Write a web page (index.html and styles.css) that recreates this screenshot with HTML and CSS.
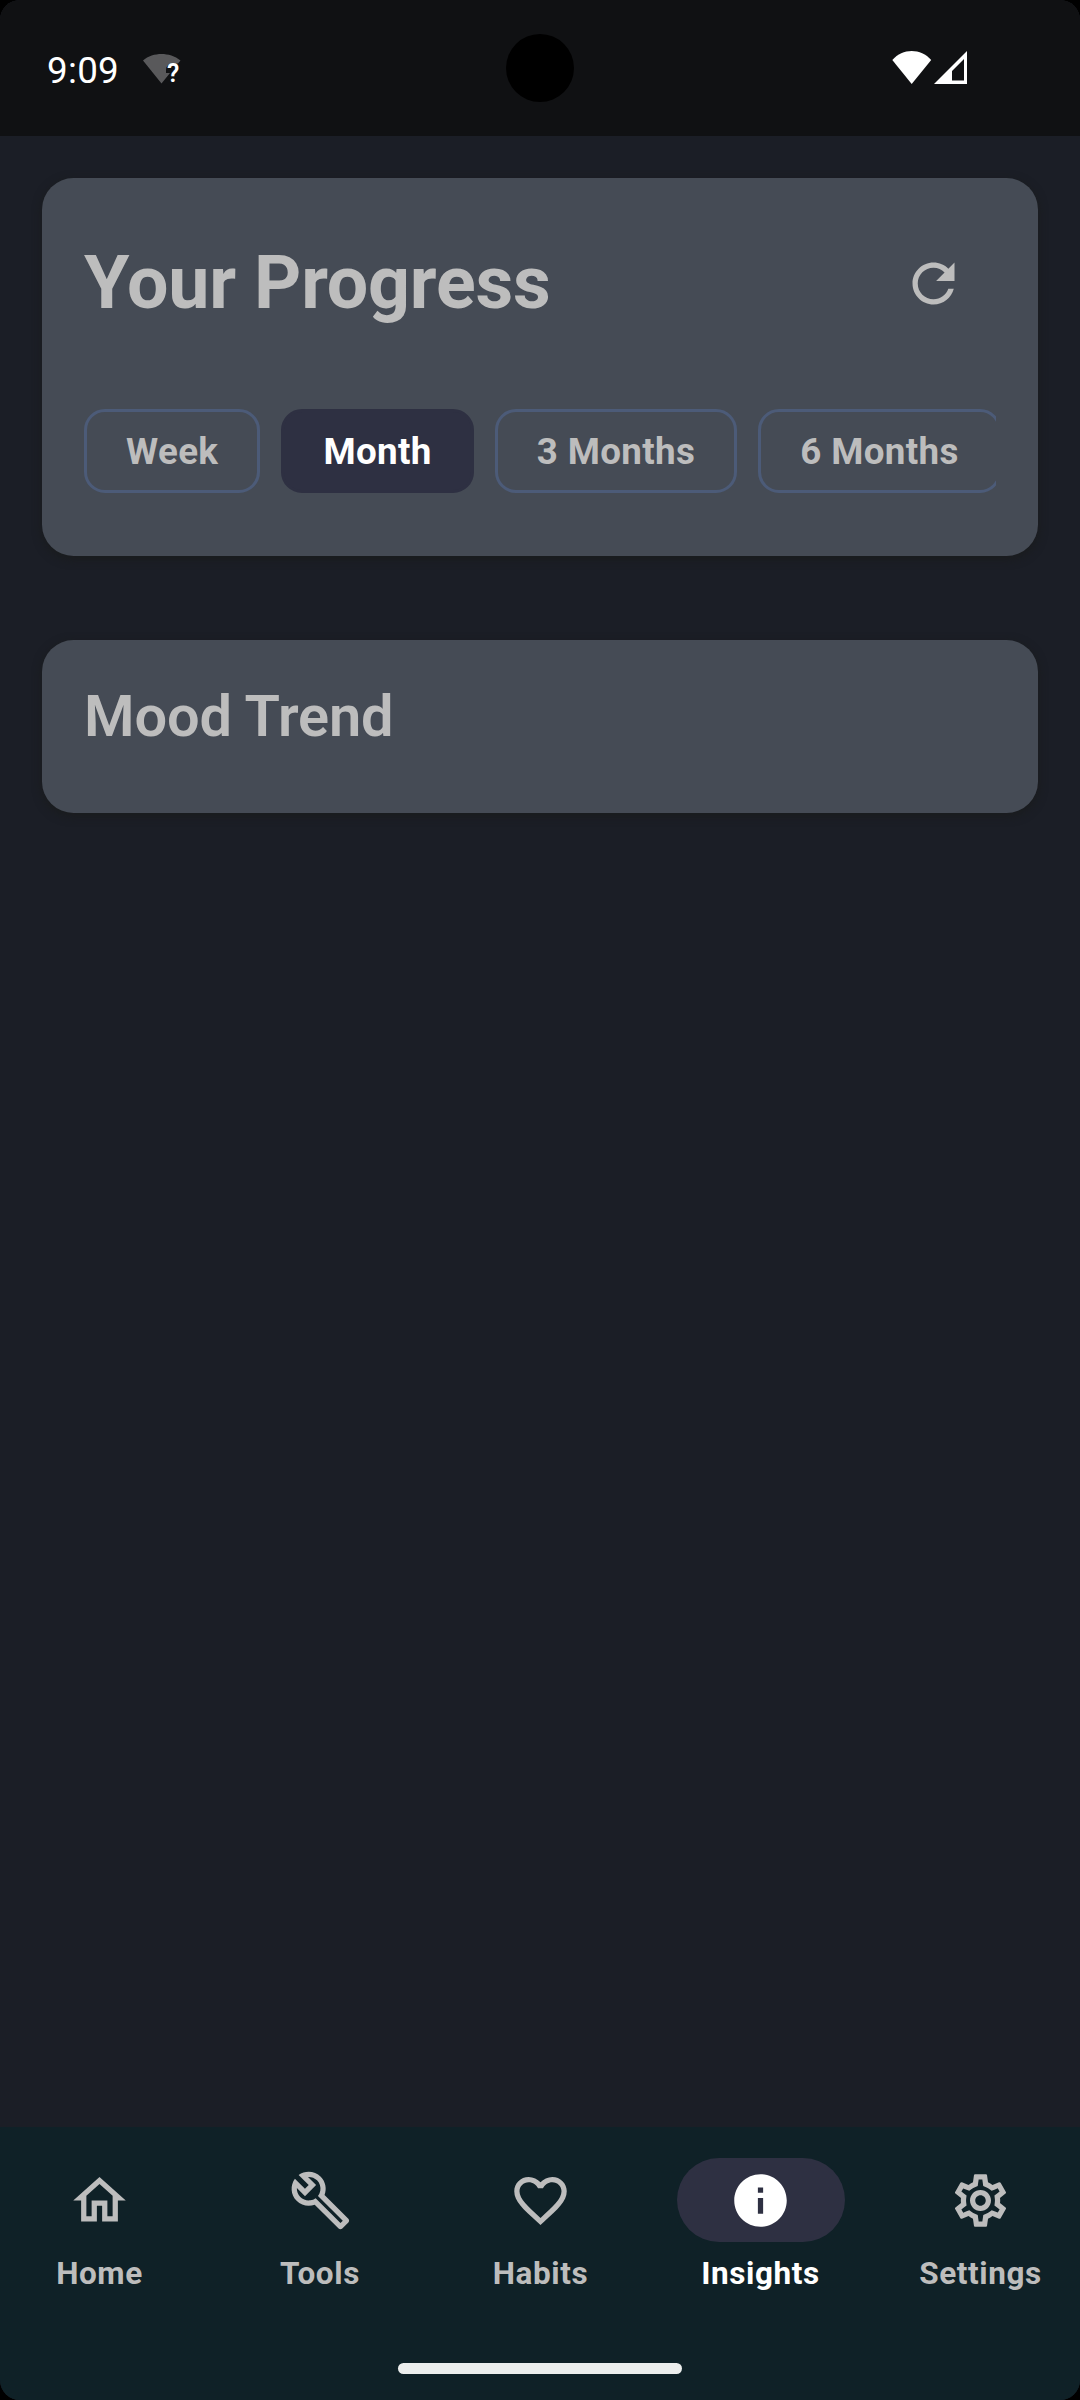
FILE: index.html
```html
<!DOCTYPE html>
<html lang="en">
<head>
<meta charset="utf-8">
<title>Insights</title>
<link rel="stylesheet" href="styles.css">
</head>
<body>
<div class="screen">
  <header class="status">
    <span class="clock">9:09</span>
    <svg class="wifi-unknown" viewBox="0 0 40 32" width="40" height="32">
      <path fill="#59595b" d="M1 7.500C6 3 13 1 19.500 1S33 3 38.500 7.500L36 10.500H31Q24 11 24 17V20H28L19.500 30.500Z"/>
      <text class="wifi-mark" x="25" y="29">?</text>
    </svg>
    <span class="camera"></span>
    <span class="radios">
      <svg viewBox="0 0 40 34" width="40" height="34"><path fill="#fff" d="M0.300 10C5.500 4 12.500 1 19.700 1S34 4 39.200 10L19.700 34Z"/></svg>
      <svg viewBox="0 0 34 34" width="34" height="34"><path fill="#fff" fill-rule="evenodd" d="M33 1V34H0ZM30 9L18 21V30.500H30Z"/></svg>
    </span>
  </header>

  <main class="content">
    <section class="card progress">
      <div class="title-row">
        <h1 class="title">Your Progress</h1>
        <svg class="icon refresh" viewBox="0 0 24 24"><path d="M17.650 6.350C16.200 4.900 14.210 4 12 4c-4.420 0-7.990 3.580-7.990 8s3.570 8 7.990 8c3.730 0 6.840-2.550 7.730-6h-2.080c-.82 2.330-3.040 4-5.650 4-3.310 0-6-2.690-6-6s2.690-6 6-6c1.660 0 3.140.69 4.220 1.780L13 11h7V4l-2.350 2.350z"/></svg>
      </div>
      <div class="chips">
        <span class="chip">Week</span>
        <span class="chip selected">Month</span>
        <span class="chip">3 Months</span>
        <span class="chip">6 Months</span>
      </div>
    </section>
    <section class="card mood">
      <h2 class="subtitle">Mood Trend</h2>
    </section>
  </main>

  <footer class="bottom">
    <nav class="nav">
      <div class="item">
        <span class="pill"><svg class="icon" viewBox="0 0 24 24"><path d="M12 5.690l5 4.500V18h-2v-6H9v6H7v-7.810l5-4.500M12 3L2 12h3v8h6v-6h2v6h6v-8h3L12 3z"/></svg></span>
        <span class="label">Home</span>
      </div>
      <div class="item">
        <span class="pill"><svg class="icon" viewBox="0 0 24 24"><path fill-rule="evenodd" d="M22.610 18.990l-9.080-9.080c.93-2.340.45-5.100-1.440-7C9.790.61 6.210.4 3.660 2.260L7.500 6.110 6.080 7.520 2.250 3.690C.39 6.230.6 9.820 2.900 12.110c1.860 1.860 4.570 2.350 6.890 1.480l9.110 9.110c.39.39 1.020.39 1.410 0l2.300-2.300c.4-.38.4-1.010 0-1.410zm-3 1.600l-9.460-9.460c-.61.45-1.290.72-2 .82-1.360.2-2.790-.21-3.830-1.250C3.370 9.760 2.930 8.500 3 7.260l3.090 3.090 4.240-4.240-3.090-3.090c1.240-.07 2.490.37 3.440 1.310 1.080 1.080 1.490 2.570 1.240 3.960-.12.71-.42 1.370-.88 1.960l9.450 9.450-.88.89z"/></svg></span>
        <span class="label">Tools</span>
      </div>
      <div class="item">
        <span class="pill"><svg class="icon" viewBox="0 0 24 24"><path d="M16.500 3c-1.740 0-3.410.81-4.500 2.090C10.910 3.810 9.240 3 7.500 3 4.420 3 2 5.420 2 8.500c0 3.780 3.400 6.860 8.550 11.540L12 21.350l1.450-1.320C18.600 15.360 22 12.280 22 8.500 22 5.420 19.580 3 16.500 3zm-4.400 15.550l-.1.1-.1-.1C7.140 14.240 4 11.390 4 8.500 4 6.500 5.500 5 7.500 5c1.540 0 3.040.99 3.570 2.360h1.870C13.460 5.990 14.960 5 16.500 5c2 0 3.500 1.500 3.500 3.500 0 2.890-3.140 5.740-7.900 10.050z"/></svg></span>
        <span class="label">Habits</span>
      </div>
      <div class="item active">
        <span class="pill"><svg class="icon" viewBox="0 0 24 24"><path d="M12 2C6.480 2 2 6.480 2 12s4.480 10 10 10 10-4.480 10-10S17.520 2 12 2zm1 15h-2v-6h2v6zm0-8h-2V7h2v2z"/></svg></span>
        <span class="label">Insights</span>
      </div>
      <div class="item">
        <span class="pill"><svg class="icon" viewBox="0 0 24 24"><path d="M19.430 12.980c.04-.32.07-.64.07-.98s-.03-.66-.07-.98l2.110-1.650c.19-.15.24-.42.12-.64l-2-3.460c-.09-.16-.26-.25-.44-.25-.06 0-.12.01-.17.03l-2.490 1c-.52-.4-1.080-.73-1.690-.98l-.38-2.650C14.460 2.180 14.250 2 14 2h-4c-.25 0-.46.18-.49.42l-.38 2.650c-.61.25-1.170.59-1.690.98l-2.490-1c-.06-.02-.12-.03-.18-.03-.17 0-.34.09-.43.25l-2 3.460c-.13.22-.07.49.12.64l2.110 1.650c-.04.32-.07.65-.07.98s.03.66.07.98l-2.110 1.650c-.19.15-.24.42-.12.64l2 3.460c.09.16.26.25.44.25.06 0 .12-.01.17-.03l2.490-1c.52.4 1.080.73 1.690.98l.38 2.650c.03.24.24.42.49.42h4c.25 0 .46-.18.49-.42l.38-2.650c.61-.25 1.170-.59 1.690-.98l2.490 1c.06.02.12.03.18.03.17 0 .34-.09.43-.25l2-3.460c.12-.22.07-.49-.12-.64l-2.110-1.650zm-1.980-1.710c.04.31.05.52.05.73 0 .21-.02.43-.05.73l-.14 1.130.89.7 1.080.84-.7 1.210-1.270-.51-1.040-.42-.9.68c-.43.32-.84.56-1.250.73l-1.060.43-.16 1.130-.2 1.350h-1.400l-.19-1.350-.16-1.130-1.060-.43c-.43-.18-.83-.41-1.230-.71l-.91-.7-1.060.43-1.270.51-.7-1.210 1.080-.84.89-.7-.14-1.130c-.03-.31-.05-.54-.05-.74s.02-.43.05-.73l.14-1.130-.89-.7-1.080-.84.7-1.210 1.270.51 1.040.42.9-.68c.43-.32.84-.56 1.250-.73l1.060-.43.16-1.130.2-1.350h1.390l.19 1.350.16 1.130 1.060.43c.43.18.83.41 1.230.71l.91.7 1.060-.43 1.270-.51.7 1.210-1.070.85-.89.7.14 1.130zM12 8c-2.210 0-4 1.790-4 4s1.790 4 4 4 4-1.790 4-4-1.790-4-4-4zm0 6c-1.100 0-2-.9-2-2s.9-2 2-2 2 .9 2 2-.9 2-2 2z"/></svg></span>
        <span class="label">Settings</span>
      </div>
    </nav>
    <div class="handle"></div>
  </footer>
</div>
</body>
</html>
```

FILE: styles.css
```css
* {
  box-sizing: border-box;
}

body {
  margin: 0;
  background: #000;
  font-family: Roboto, "Liberation Sans", sans-serif;
}

.screen {
  display: flex;
  flex-direction: column;
  width: 1080px;
  height: 2400px;
  overflow: hidden;
  border-radius: 20px;
  background: #1b1e26;
  color: #bdbdbd;
}

svg {
  display: block;
  flex: none;
}

.icon {
  width: 63px;
  height: 63px;
  fill: currentColor;
}

.status {
  position: relative;
  display: flex;
  align-items: flex-start;
  height: 136px;
  padding: 0 112px 0 47px;
  background: #101113;
  color: #fff;
}

.clock {
  width: 95px;
  margin-top: 49px;
  font-size: 36.75px;
  line-height: 43px;
  letter-spacing: 0.3px;
}

.wifi-unknown {
  margin-top: 53px;
  overflow: visible;
}

.wifi-mark {
  fill: #fff;
  font-size: 25px;
  font-weight: 600;
}

.camera {
  position: absolute;
  top: 34px;
  left: 506px;
  width: 68px;
  height: 68px;
  border-radius: 50%;
  background: #000;
}

.radios {
  display: flex;
  gap: 2px;
  margin: 50px 0 0 auto;
}

.content {
  display: flex;
  flex: 1;
  flex-direction: column;
  gap: 84px;
  padding: 42px;
}

.card {
  border-radius: 31.5px;
  background: #454b55;
  box-shadow: 0 3px 8px 1px #1a1c1e;
}

.progress {
  height: 378px;
  padding: 42px;
}

.title-row {
  display: flex;
  align-items: center;
  justify-content: space-between;
  height: 126px;
  padding-right: 31.5px;
}

.title {
  margin: 0;
  font-size: 73.5px;
  font-weight: 700;
  line-height: 94px;
  letter-spacing: -0.2px;
}

.chips {
  display: flex;
  gap: 21px;
  margin-top: 63px;
  overflow: hidden;
}

.chip {
  flex: none;
  height: 84px;
  padding: 1px 39px 0;
  border: 3px solid #4c5b78;
  border-radius: 21px;
  font-size: 36.75px;
  font-weight: 700;
  line-height: 78px;
  letter-spacing: 0.36px;
}

.chip.selected {
  border-color: #2e3042;
  background: #2e3042;
  color: #fff;
}

.mood {
  height: 173px;
  padding: 42px;
}

.subtitle {
  margin: 0;
  font-size: 57.75px;
  font-weight: 600;
  line-height: 68px;
  letter-spacing: -0.15px;
}

.bottom {
  display: flex;
  flex-direction: column;
  align-items: center;
  height: 273px;
  background: #0f2127;
}

.nav {
  display: grid;
  grid-template-columns: 199px 200px 199px 199px 199px;
  gap: 21px;
  height: 236px;
  padding-top: 31px;
}

.item {
  display: flex;
  flex-direction: column;
  align-items: center;
  gap: 11px;
}

.pill {
  display: flex;
  align-items: center;
  justify-content: center;
  width: 168px;
  height: 84px;
  border-radius: 42px;
}

.label {
  font-size: 31.5px;
  font-weight: 700;
  line-height: 42px;
  letter-spacing: 0.6px;
}

.active {
  color: #fff;
}

.active .pill {
  background: #2e3042;
}

.handle {
  width: 284px;
  height: 11px;
  border-radius: 5.5px;
  background: #eceeed;
}
```
